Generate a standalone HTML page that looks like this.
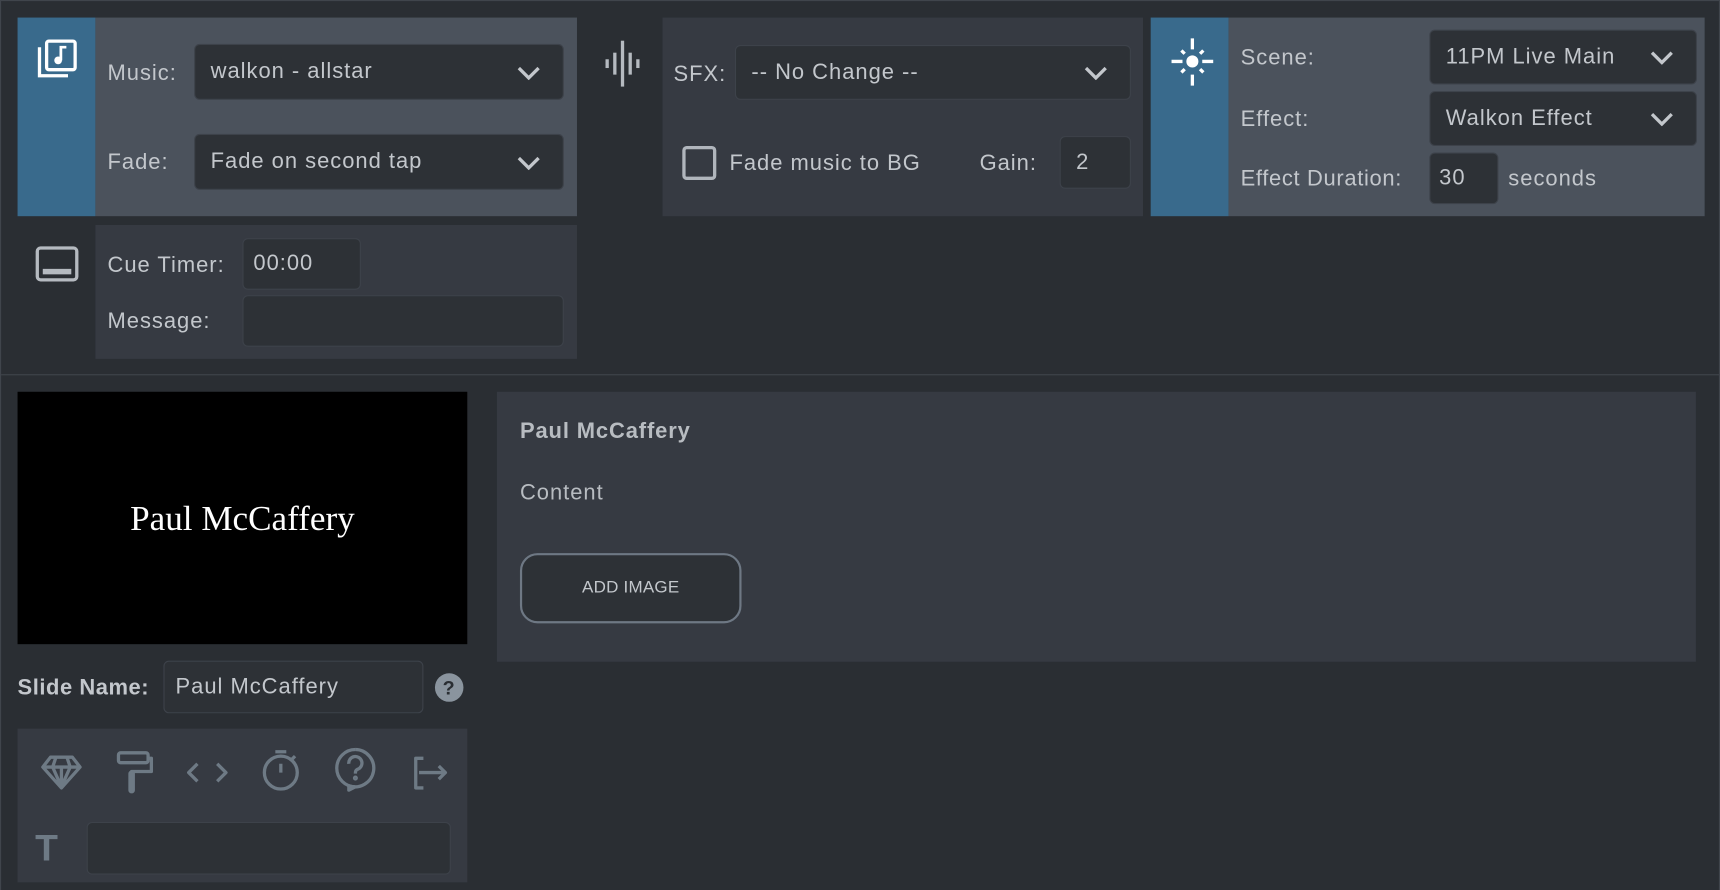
<!DOCTYPE html>
<html><head><meta charset="utf-8"><style>
*{box-sizing:border-box;margin:0;padding:0}
html,body{width:1720px;height:890px;overflow:hidden;background:#2a2e33}
#w{position:absolute;left:0;top:0;width:1568px;height:811px;transform:scale(1.09694,1.0974);transform-origin:0 0;font-family:"Liberation Sans",sans-serif;color:#c3c7cc;font-size:20px;letter-spacing:0.9px;border:1px solid #40454c;border-bottom:none}
.a{position:absolute}
.sel,.inp{position:absolute;background:#2d3136;border:1px solid #3d424a;border-radius:5px;padding-left:14px;display:flex;align-items:center;color:#c3c7cc}
.sel svg{position:absolute;right:20px;top:50%;margin-top:-6px}
.lbl{position:absolute;line-height:22px}
</style></head><body><div id="w">
<div class="a" style="left:0;top:340px;width:1568px;height:1px;background:#40454c"></div>

<!-- music -->
<div class="a" style="left:15px;top:15px;width:71px;height:181px;background:#396a8c"></div>
<div class="a" style="left:86px;top:15px;width:439px;height:181px;background:#4b525c"></div>
<svg class="a" style="left:32px;top:34px" width="38" height="38" viewBox="0 0 38 38"><path d="M3 8v26h26" fill="none" stroke="#fff" stroke-width="3"/><rect x="9.5" y="2.5" width="26" height="26" rx="2" fill="none" stroke="#fff" stroke-width="3"/><circle cx="20" cy="20" r="3.5" fill="#fff"/><path d="M22.5 20V8h5" fill="none" stroke="#fff" stroke-width="2.5"/></svg>
<div class="lbl" style="left:97px;top:55px">Music:</div>
<div class="sel" style="left:176px;top:39px;width:337px;height:51px">walkon - allstar<svg width="22" height="13" viewBox="0 0 22 13"><path d="M2 2l9 9 9-9" fill="none" stroke="#c3c7cc" stroke-width="3"/></svg></div>
<div class="lbl" style="left:97px;top:136px">Fade:</div>
<div class="sel" style="left:176px;top:121px;width:337px;height:51px">Fade on second tap<svg width="22" height="13" viewBox="0 0 22 13"><path d="M2 2l9 9 9-9" fill="none" stroke="#c3c7cc" stroke-width="3"/></svg></div>

<!-- cue -->
<div class="a" style="left:86px;top:204px;width:439px;height:122px;background:#363a42"></div>
<svg class="a" style="left:31px;top:223px" width="40" height="33" viewBox="0 0 40 33"><rect x="2" y="2" width="36" height="29" rx="3" fill="none" stroke="#b5bac0" stroke-width="3"/><rect x="7" y="21" width="26" height="5" fill="#b5bac0"/></svg>
<div class="lbl" style="left:97px;top:230px">Cue Timer:</div>
<div class="inp" style="left:220px;top:216px;width:108px;height:47px;padding-left:9px">00:00</div>
<div class="lbl" style="left:97px;top:281px">Message:</div>
<div class="inp" style="left:220px;top:268px;width:293px;height:47px"></div>

<!-- sfx -->
<svg class="a" style="left:549px;top:36px" width="36" height="42" viewBox="0 0 36 42"><g fill="#b5bac0"><rect x="2" y="17" width="3" height="8"/><rect x="9" y="11" width="3" height="20"/><rect x="16" y="0" width="3" height="42"/><rect x="23" y="11" width="3" height="20"/><rect x="30" y="17" width="3" height="8"/></g></svg>
<div class="a" style="left:603px;top:15px;width:438px;height:181px;background:#363a42"></div>
<div class="lbl" style="left:613px;top:56px">SFX:</div>
<div class="sel" style="left:669px;top:40px;width:361px;height:50px">-- No Change --<svg width="22" height="13" viewBox="0 0 22 13"><path d="M2 2l9 9 9-9" fill="none" stroke="#c3c7cc" stroke-width="3"/></svg></div>
<div class="a" style="left:621px;top:132px;width:31px;height:31px;border:3px solid #b0b5bc;border-radius:4px"></div>
<div class="lbl" style="left:664px;top:137px">Fade music to BG</div>
<div class="lbl" style="left:892px;top:137px">Gain:</div>
<div class="inp" style="left:965px;top:123px;width:65px;height:48px">2</div>

<!-- scene -->
<div class="a" style="left:1048px;top:15px;width:71px;height:181px;background:#396a8c"></div>
<div class="a" style="left:1119px;top:15px;width:434px;height:181px;background:#4b525c"></div>
<svg class="a" style="left:1066px;top:33px" width="40" height="46" viewBox="0 0 40 46"><g stroke="#fff" stroke-width="3"><path d="M20 1v10M20 34v10M1 22h10M29 22h10M10 12l3 3M30 12l-3 3M10 32l3-3M30 32l-3-3"/></g><circle cx="20" cy="22" r="5.5" fill="#fff"/></svg>
<div class="lbl" style="left:1130px;top:41px">Scene:</div>
<div class="sel" style="left:1302px;top:26px;width:244px;height:50px">11PM Live Main<svg width="22" height="13" viewBox="0 0 22 13"><path d="M2 2l9 9 9-9" fill="none" stroke="#c3c7cc" stroke-width="3"/></svg></div>
<div class="lbl" style="left:1130px;top:97px">Effect:</div>
<div class="sel" style="left:1302px;top:82px;width:244px;height:50px">Walkon Effect<svg width="22" height="13" viewBox="0 0 22 13"><path d="M2 2l9 9 9-9" fill="none" stroke="#c3c7cc" stroke-width="3"/></svg></div>
<div class="lbl" style="left:1130px;top:151px;letter-spacing:0.6px">Effect Duration:</div>
<div class="inp" style="left:1302px;top:138px;width:63px;height:47px;padding-left:8px">30</div>
<div class="lbl" style="left:1374px;top:151px">seconds</div>

<!-- preview -->
<div class="a" style="left:15px;top:356px;width:410px;height:230px;background:#000;color:#fff;font-family:'Liberation Serif',serif;font-size:32px;letter-spacing:0;display:flex;align-items:center;justify-content:center">Paul McCaffery</div>
<div class="a" style="left:452px;top:356px;width:1093px;height:246px;background:#363a42"></div>
<div class="lbl" style="left:473px;top:381px;font-weight:bold;color:#b8bcc1;letter-spacing:0.8px">Paul McCaffery</div>
<div class="lbl" style="left:473px;top:437px;color:#b8bcc1">Content</div>
<div class="a" style="left:473px;top:503px;width:202px;height:64px;border:2px solid #6e7884;border-radius:16px;background:#2d3136;display:flex;align-items:center;justify-content:center;font-size:15.5px;letter-spacing:0.2px;color:#c3c7cc">ADD IMAGE</div>

<div class="lbl" style="left:15px;top:615px;font-weight:bold;color:#c3c7cc;letter-spacing:0.5px">Slide Name:</div>
<div class="inp" style="left:148px;top:601px;width:237px;height:48px;padding-left:10px">Paul McCaffery</div>
<svg class="a" style="left:395px;top:612px" width="27" height="27" viewBox="0 0 27 27"><circle cx="13.5" cy="13.5" r="13" fill="#8a949e"/><text x="13.5" y="20" text-anchor="middle" font-family="Liberation Sans" font-weight="bold" font-size="18" fill="#2a2e33">?</text></svg>

<!-- toolbox -->
<div class="a" style="left:15px;top:663px;width:410px;height:140px;background:#363a42"></div>
<svg class="a" style="left:0;top:660px" width="440" height="70" viewBox="0 660 440 70"><g fill="none" stroke="#6e7a85" stroke-width="3" stroke-linejoin="round">
<path d="M38 698L45 689H65L72 698L55 717Z M38 698H72 M50 689L47 698L55 716 M60 689L63 698L55 716 M55 698V716"/>
<rect x="107" y="685" width="27" height="9" rx="2"/><path d="M134 690h3v12h-18v6"/><path d="M119 704v15" stroke-width="6" stroke-linecap="round"/>
<path d="M179 695l-8 8 8 8M197 695l8 8-8 8"/>
<circle cx="255" cy="703" r="15"/><path d="M250 684h10M255 695v8M265 691l3-3"/>
<path d="M323 682a17 17 0 1 1 -6 33l0 4l6-3"/><path d="M323 716a17 17 0 0 1 0-34"/><path d="M317 695a6 6 0 1 1 8 5c-2 1-2 2-2 4"/><circle cx="323" cy="708" r="0.8" fill="#6e7a85"/>
<path d="M385 690h-7v27h7M381 703h24M399 697l6 6-6 6"/>
</g></svg>
<div class="a" style="left:31px;top:757px;font-size:34px;font-weight:bold;color:#6e7a85;line-height:30px;letter-spacing:0">T</div>
<div class="inp" style="left:78px;top:748px;width:332px;height:48px"></div>
</div></body></html>
